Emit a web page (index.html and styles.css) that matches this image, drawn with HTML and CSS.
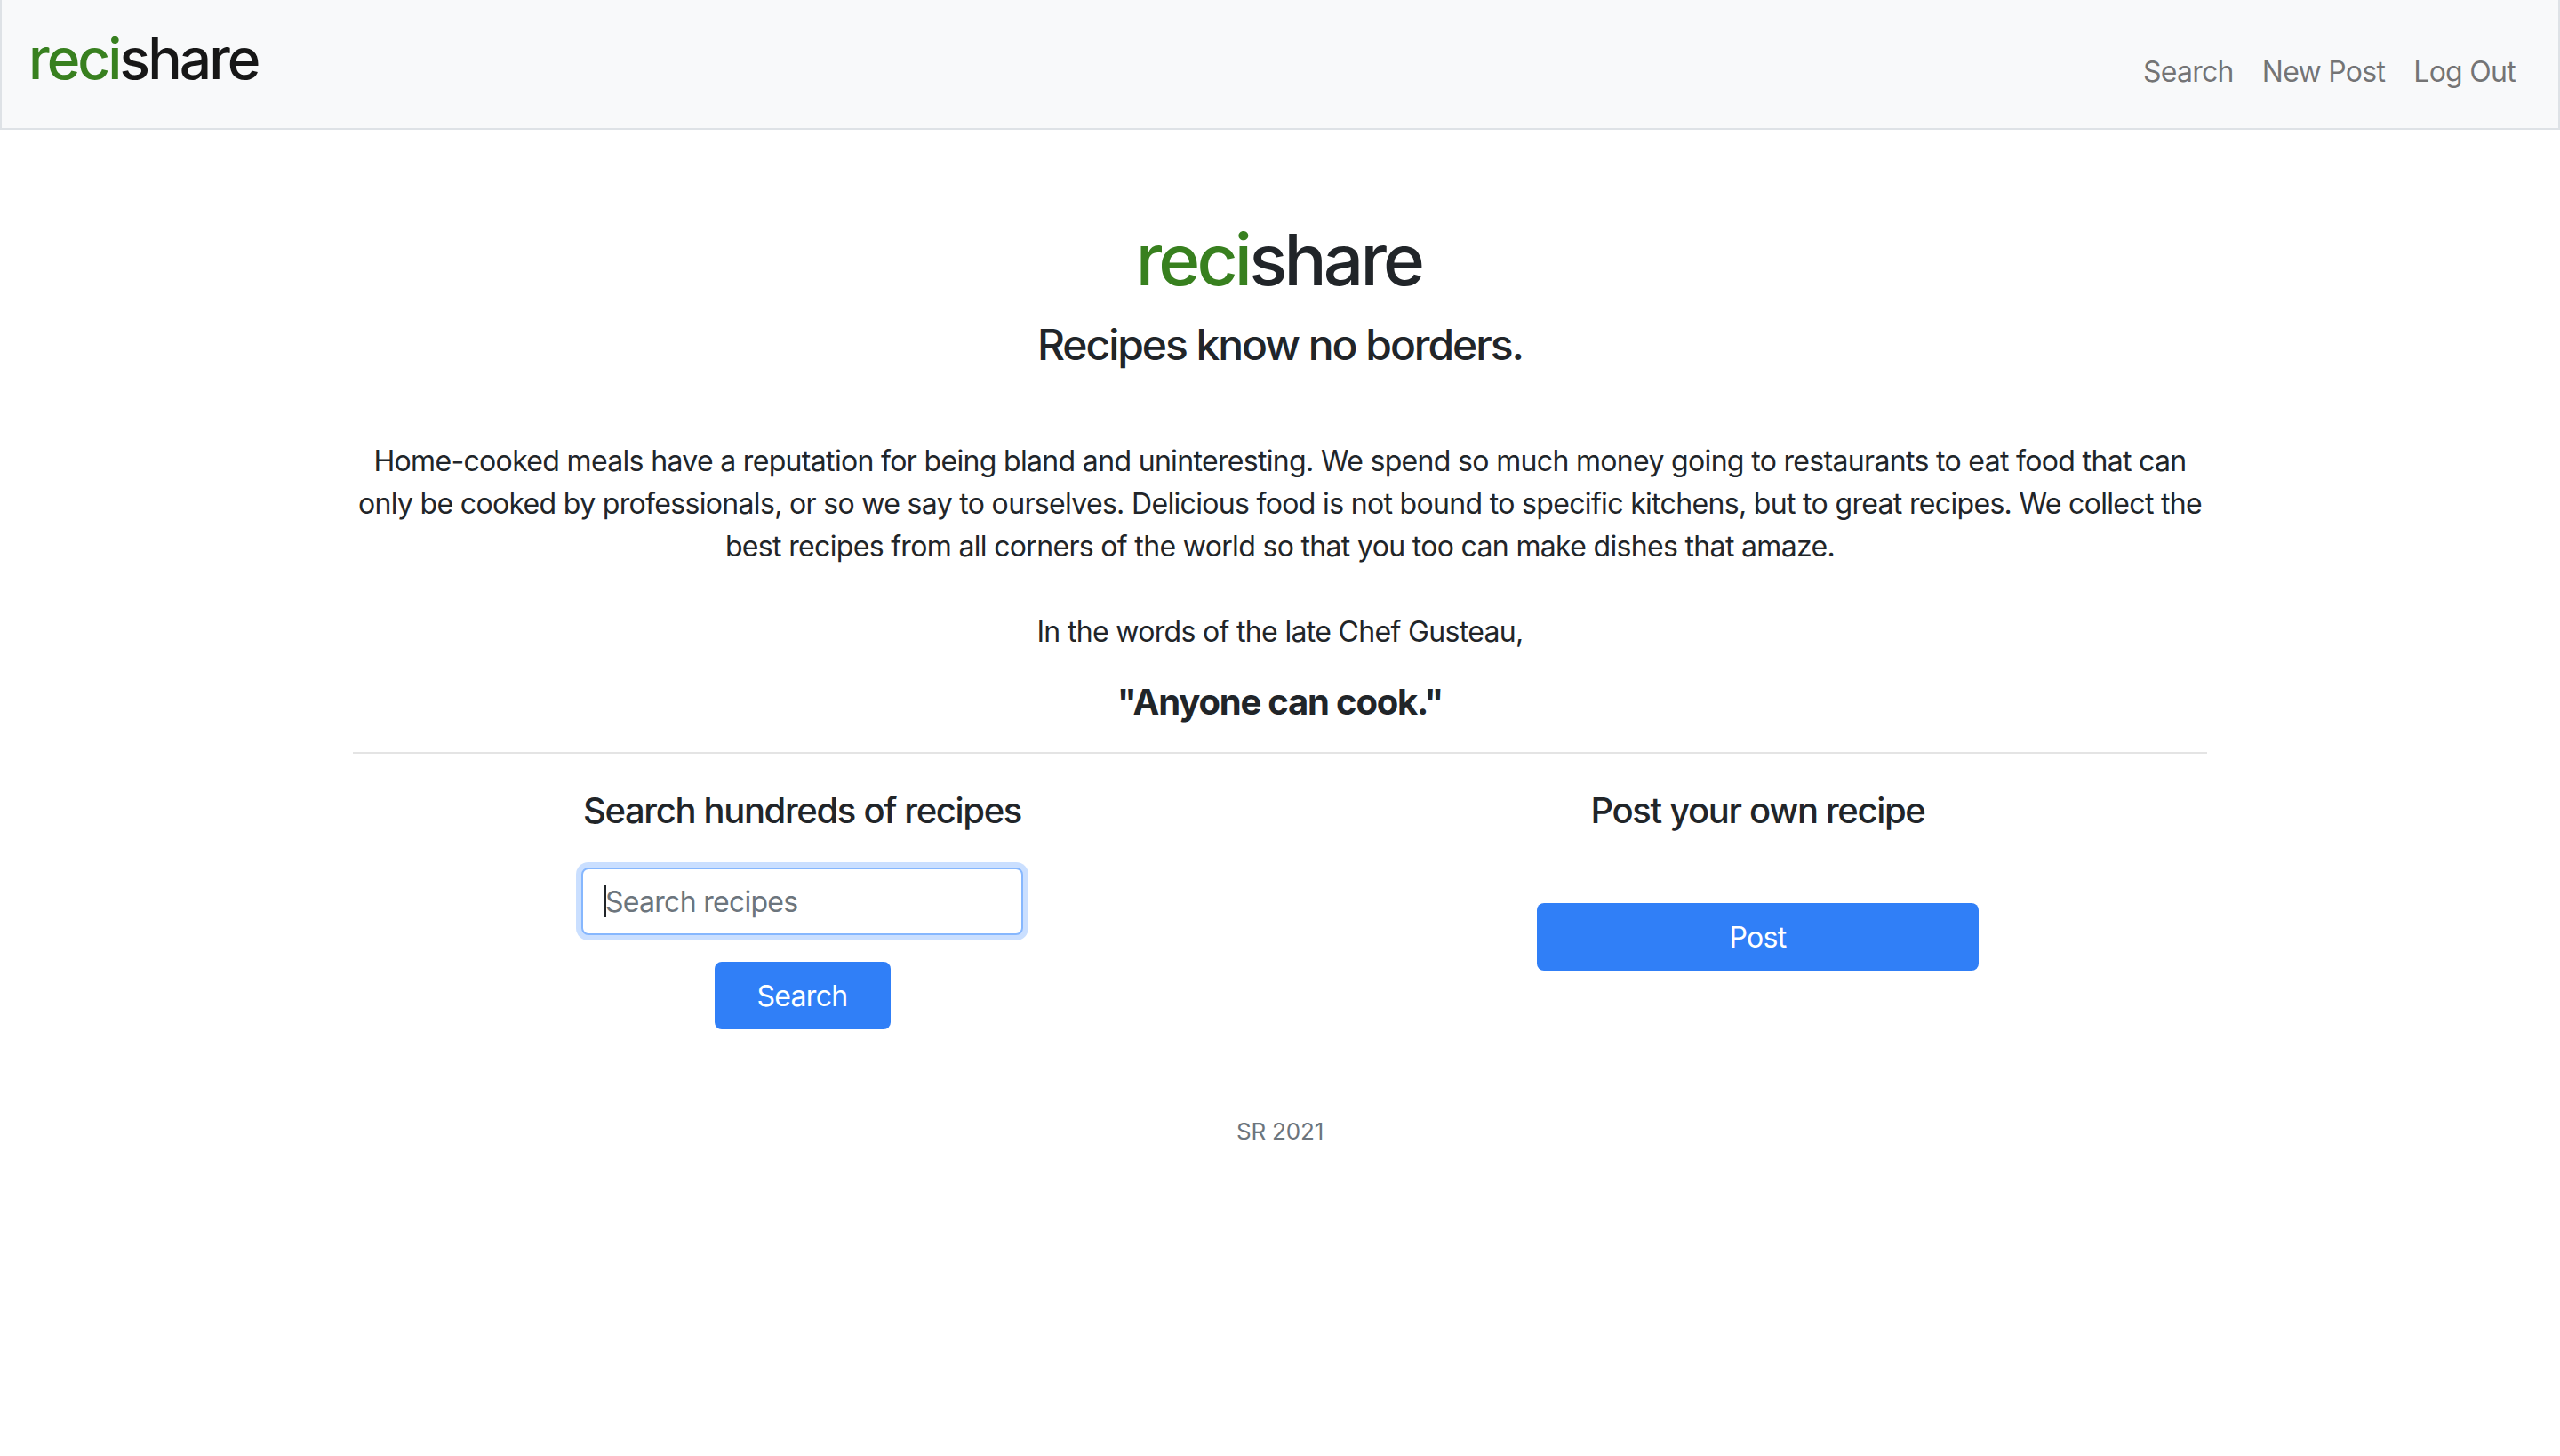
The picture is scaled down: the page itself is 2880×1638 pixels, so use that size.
FILE: index.html
```html
<!DOCTYPE html>
<html lang="en">
<head>
<meta charset="utf-8">
<title>recishare</title>
<link rel="stylesheet" href="styles.css">
</head>
<body>
<nav class="navbar">
  <a class="brand"><span class="green">reci</span>share</a>
  <ul class="nav-links">
    <li><a>Search</a></li>
    <li><a>New Post</a></li>
    <li><a>Log Out</a></li>
  </ul>
</nav>
<main class="content">
  <h1 class="title"><span class="green">reci</span>share</h1>
  <h3 class="tagline">Recipes know no borders.</h3>
  <p class="intro">Home-cooked meals have a reputation for being bland and uninteresting. We spend so much money going to restaurants to eat food that can only be cooked by professionals, or so we say to ourselves. Delicious food is not bound to specific kitchens, but to great recipes. We collect the best recipes from all corners of the world so that you too can make dishes that amaze.</p>
  <p class="words">In the words of the late Chef Gusteau,</p>
  <h4 class="quote">"Anyone can cook."</h4>
  <hr class="rule">
  <div class="actions">
    <section class="action">
      <h4 class="action-title">Search hundreds of recipes</h4>
      <div class="field">
        <input class="input" type="text" placeholder="Search recipes">
        <span class="caret"></span>
      </div>
      <button class="btn">Search</button>
    </section>
    <section class="action">
      <h4 class="action-title">Post your own recipe</h4>
      <button class="btn btn-wide">Post</button>
    </section>
  </div>
  <footer class="foot">SR 2021</footer>
</main>
</body>
</html>
```
FILE: styles.css
```css
* { box-sizing: border-box; }
html, body { margin: 0; padding: 0; }
body {
  font-family: Inter, "Liberation Sans", sans-serif;
  font-size: 32px;
  line-height: 48px;
  letter-spacing: -0.67px;
  color: #212529;
  background: #fff;
}
.green { color: #38801f; }
.navbar {
  display: flex;
  justify-content: space-between;
  align-items: flex-start;
  height: 146px;
  background: #f8f9fa;
  border: 2px solid #dee2e6;
  border-top: 0;
  padding: 0 32px;
}
.brand {
  font-size: 64px;
  line-height: 77px;
  font-weight: 550;
  letter-spacing: -2.9px;
  color: #171717;
  margin: 27px 0 0 -2px;
}
.nav-links {
  display: flex;
  list-style: none;
  margin: 57px 0 0;
  padding: 0;
  letter-spacing: -0.72px;
}
.nav-links a {
  display: block;
  padding: 0 16px;
  color: rgba(0, 0, 0, .55);
}
.content {
  width: 2086px;
  margin: 0 auto;
  text-align: center;
}
.title {
  font-size: 80px;
  line-height: 96px;
  font-weight: 550;
  letter-spacing: -3.8px;
  margin: 98px 0 0;
  padding-right: 3px;
}
.tagline {
  font-size: 48px;
  line-height: 60px;
  font-weight: 500;
  letter-spacing: -2.05px;
  margin: 18px 0 0;
}
.intro { margin: 77px 0 0; }
.words { margin: 48px 0 0; }
.quote {
  font-size: 40px;
  line-height: 48px;
  font-weight: 700;
  letter-spacing: -1.2px;
  margin: 31px 0 0;
}
.rule {
  border: 0;
  border-top: 2px solid #e4e4e4;
  margin: 32px 0 0;
}
.actions {
  display: grid;
  grid-template-columns: 1fr 1fr;
  margin: 40px -32px 0;
}
.action {
  display: flex;
  flex-direction: column;
  align-items: center;
}
.action-title {
  font-size: 40px;
  line-height: 48px;
  font-weight: 500;
  letter-spacing: -1.35px;
  margin: 0;
}
.field {
  position: relative;
  width: 497px;
  margin-top: 40px;
}
.input {
  display: block;
  width: 100%;
  height: 76px;
  padding: 0 25px;
  font: inherit;
  letter-spacing: -0.72px;
  color: #212529;
  background: #fff;
  border: 2px solid #86b7fe;
  border-radius: 8px;
  box-shadow: 0 0 0 6px rgba(13, 110, 253, .22);
  outline: 0;
}
.input::placeholder { color: #6c757d; opacity: 1; }
.caret {
  position: absolute;
  left: 26px;
  top: 20px;
  width: 2px;
  height: 36px;
  background: #212529;
}
.btn {
  display: block;
  width: 198px;
  height: 76px;
  margin-top: 30px;
  padding: 2px 0 0;
  font: inherit;
  letter-spacing: inherit;
  color: #fff;
  background: #307ff7;
  border: 0;
  border-radius: 8px;
}
.btn-wide { width: 497px; margin-top: 80px; }
.foot {
  margin-top: 91px;
  font-size: 26px;
  letter-spacing: -0.2px;
  color: #6c757d;
}
```
